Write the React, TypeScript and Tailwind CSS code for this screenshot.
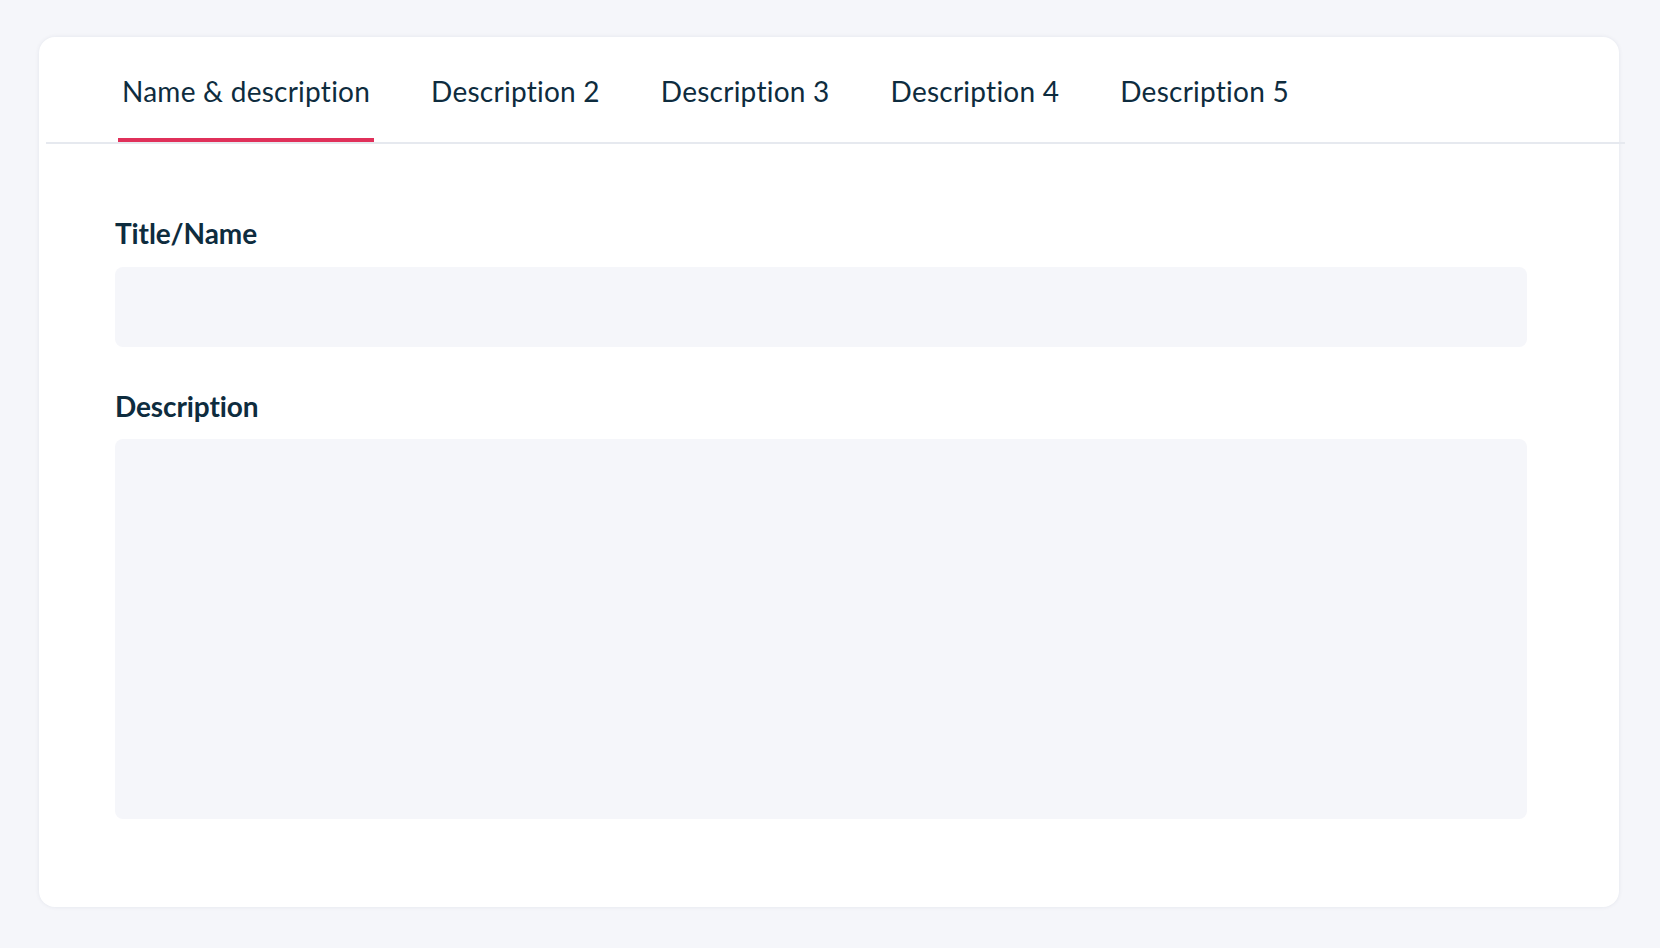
import { useState } from "react";

const tabs = [
  "Name & description",
  "Description 2",
  "Description 3",
  "Description 4",
  "Description 5",
];

export default function App() {
  const [active, setActive] = useState(0);

  return (
    <div
      className="min-h-[948px] w-full bg-[#f5f6fa] pt-[37px] pl-[39px] text-[#0e2c3e]"
      style={{ fontFamily: "Lato, 'Noto Sans', sans-serif" }}
    >
      <div className="h-[870px] w-[1580px] rounded-2xl bg-white shadow-[0_0_4px_rgba(20,40,80,0.08)]">
        {/* tabs */}
        <div className="flex gap-[53px] pl-[79px]">
          {tabs.map((t, i) => (
            <button
              key={t}
              onClick={() => setActive(i)}
              className={`px-1 pt-[37px] pb-[30px] text-[28px] leading-[34px] tracking-[0.25px] border-b-4 ${
                active === i ? "border-[#e0305a]" : "border-transparent"
              }`}
            >
              {t}
            </button>
          ))}
        </div>
        <div className="ml-[7px] h-[2px] w-[1579px] bg-[#e6e9ef]" />

        {/* form */}
        <div className="pl-[76px] pr-[92px] pt-[72px]">
          <label className="block text-[28px] font-bold leading-[34px] tracking-[-0.1px]">
            Title/Name
          </label>
          <input
            type="text"
            className="mt-[17px] block h-[80px] w-full rounded-lg bg-[#f5f6fa] px-6 text-[24px] outline-none"
          />
          <label className="mt-[42px] block text-[28px] font-bold leading-[34px] tracking-[-0.1px]">
            Description
          </label>
          <textarea className="mt-4 block h-[380px] w-full resize-none rounded-lg bg-[#f5f6fa] p-6 text-[24px] outline-none" />
        </div>
      </div>
    </div>
  );
}
